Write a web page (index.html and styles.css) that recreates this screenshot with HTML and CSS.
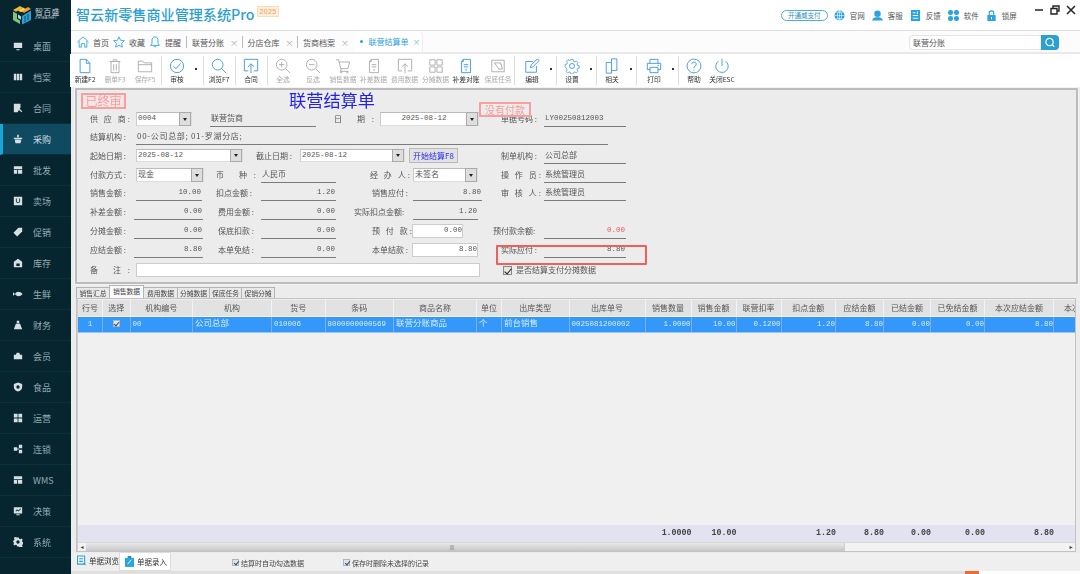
FILE: index.html
```html
<!DOCTYPE html>
<html lang="zh-CN">
<head>
<meta charset="utf-8">
<title>智云新零售商业管理系统Pro</title>
<link rel="stylesheet" href="styles.css">
</head>
<body>
<svg class="defs" width="0" height="0">
  <symbol id="i-doc" viewBox="0 0 18 18"><path d="M3.5 1.5h7l4 4.5v10.500h-11zM10.500 1.500v4.500h4"/></symbol>
  <symbol id="i-trash" viewBox="0 0 18 18"><path d="M3 4h12M7 4V2h4v2M4.500 4v12.500h9V4M7.500 7v7M10.500 7v7"/></symbol>
  <symbol id="i-folder" viewBox="0 0 18 18"><path d="M1.500 3.500h5l1.500 2h8.500v10h-15zM1.500 7.500h15"/></symbol>
  <symbol id="i-check" viewBox="0 0 18 18"><circle cx="9" cy="9" r="7.500"/><path d="M5 9.500l3 2.500 5-6"/></symbol>
  <symbol id="i-search" viewBox="0 0 18 18"><circle cx="7.500" cy="7.500" r="6"/><path d="M12 12l5 5"/></symbol>
  <symbol id="i-up" viewBox="0 0 18 18"><path d="M6 14.500H1.500v-13h15v13H12M9 17V6.500M5.500 10L9 6.500l3.500 3.500"/></symbol>
  <symbol id="i-plus" viewBox="0 0 18 18"><circle cx="7.500" cy="7.500" r="6"/><path d="M12 12l5 5M4.500 7.500h6M7.500 4.500v6"/></symbol>
  <symbol id="i-minus" viewBox="0 0 18 18"><circle cx="7.500" cy="7.500" r="6"/><path d="M12 12l5 5M4.500 7.500h6"/></symbol>
  <symbol id="i-cart" viewBox="0 0 18 18"><path d="M1 2h3l2.500 10h8l2-7.500H5M7 12l-1 3h9"/><circle cx="7" cy="16" r=".8"/><circle cx="14" cy="16" r=".8"/></symbol>
  <symbol id="i-sheet" viewBox="0 0 18 18"><path d="M6 1.500h8v15H4V4zM6 1.500V4H4M6.500 7.500h5M6.500 10h5M9 12v2.500"/></symbol>
  <symbol id="i-grid" viewBox="0 0 18 18"><path d="M2 2h6v6H2zM10 2h6v6h-6zM2 10h6v6H2zM10 10h6v6h-6z"/></symbol>
  <symbol id="i-task" viewBox="0 0 18 18"><path d="M2 2.500h14v13H2zM5 5.500h7l2 7M5 5.500l5 7h4"/></symbol>
  <symbol id="i-edit" viewBox="0 0 18 18"><path d="M14 9v7H2V4h8M7 11l1-3 7-7 2 2-7 7z"/></symbol>
  <symbol id="i-gear" viewBox="0 0 18 18"><circle cx="9" cy="9" r="2.800"/><path d="M7.500 1h3l.5 2.300 1.800.8 2-1.200 2 2.100-1.200 2 .7 1.700 2.200.6v3l-2.200.5-.7 1.800 1.200 2-2 2-2-1.200-1.800.7-.5 2.300h-3l-.5-2.300-1.800-.7-2 1.200-2-2 1.200-2-.8-1.800L-.2 10.500v-3l2.300-.6.800-1.700-1.200-2 2-2.100 2 1.200 1.800-.8z" transform="translate(1.400 .9) scale(.85)"/></symbol>
  <symbol id="i-copy" viewBox="0 0 18 18"><path d="M2.500 5h6v12h-6zM8.500 14h6V1h-6v4"/></symbol>
  <symbol id="i-print" viewBox="0 0 18 18"><path d="M4.500 6V1.500h9V6M4.500 13H1.500V6h15v7h-3M4.500 10.500h9v6h-9zM13 8.300h1.500"/></symbol>
  <symbol id="i-help" viewBox="0 0 18 18"><circle cx="9" cy="9" r="7.800"/><path d="M6.500 7a2.500 2.500 0 1 1 3.700 2.200c-1 .6-1.200 1-1.200 2.300M9 13v1"/></symbol>
  <symbol id="i-power" viewBox="0 0 18 18"><path d="M9 1v8M5 3.500a7 7 0 1 0 8 0"/></symbol>
  <symbol id="s-mon" viewBox="0 0 12 12"><path d="M1 2h10v6.500H1zM4 10h4v1H4z"/></symbol>
  <symbol id="s-arc" viewBox="0 0 12 12"><path d="M1 2h2.800v8H1zM4.500 2h2.800v8H4.500zM8 2h3v8H8z"/></symbol>
  <symbol id="s-con" viewBox="0 0 12 12"><path d="M1 1h8v4.500L5.500 11H1zM8 7l3 3-1 1-3-3z"/></symbol>
  <symbol id="s-buy" viewBox="0 0 12 12"><path d="M5 1h2v3H5zM1 4.500h10v1.500H1zM2 6.500h8l-1 4.500H3z"/></symbol>
  <symbol id="s-whl" viewBox="0 0 12 12"><path d="M1 1.500h10V5H1zM1 6h4v4.500H1zM6 6h5v4.500H6z"/></symbol>
  <symbol id="s-sto" viewBox="0 0 12 12"><path d="M1 1h10v10H1zM3.500 3v3a2.500 2.500 0 0 0 5 0V3H7.500v3a1.500 1.500 0 0 1-3 0V3z" fill-rule="evenodd"/></symbol>
  <symbol id="s-tag" viewBox="0 0 12 12"><path d="M6.500 1H11v4.500L5 11.500 .5 7z"/></symbol>
  <symbol id="s-inv" viewBox="0 0 12 12"><path d="M6 1l5 3.500V11H1V4.500zM4 6.500v3h4v-3z" fill-rule="evenodd"/></symbol>
  <symbol id="s-fsh" viewBox="0 0 12 12"><path d="M0 4l2.500 2L0 8zM2.500 6C4 3 8 2 11.500 6 8 10 4 9 2.500 6z"/></symbol>
  <symbol id="s-fin" viewBox="0 0 12 12"><path d="M4.500 1h3v3h-3zM3.500 4.500h5L11 11H1z"/></symbol>
  <symbol id="s-mem" viewBox="0 0 12 12"><path d="M4.500 2h3l1 2.500H11V10H1V4.500h2.500z"/></symbol>
  <symbol id="s-shd" viewBox="0 0 12 12"><path d="M6 .5l5 2V6c0 3-2.500 4.700-5 5.500C3.500 10.700 1 9 1 6V2.500zM6 4a2 2 0 1 0 0 4 2 2 0 0 0 0-4z" fill-rule="evenodd"/></symbol>
  <symbol id="s-ops" viewBox="0 0 12 12"><path d="M1 1h4.500v4.500H1zM6.500 1H11v4.500H6.500zM1 6.500h4.500V11H1zM6.500 6.500H11V11H6.500z"/></symbol>
  <symbol id="s-lnk" viewBox="0 0 12 12"><path d="M1 4h4v4H1zM7 1h4v4H7zM7 7h4v4H7zM5 5.500h2v1H5z"/></symbol>
  <symbol id="s-dec" viewBox="0 0 12 12"><path d="M1 1.500h10v7.500H1zM4 10h4v1H4zM3 6l2-2 1.500 1.500L9 3l.7.7-3.200 3L5 5.400 3.700 6.700z" fill-rule="evenodd"/></symbol>
  <symbol id="s-sys" viewBox="0 0 12 12"><path d="M5 .5h2l.4 1.600 1.400.6 1.500-.8 1.300 1.400-.8 1.400.6 1.400 1.100.4v2l-1.100.4-.6 1.400.8 1.400-1.300 1.300-1.500-.8-1.400.6L7 11.500H5l-.4-1.600-1.400-.6-1.500.8L.4 8.800l.8-1.400L.6 6 0 5.500v-1l1.200-.4.6-1.400L1 1.300 2.300 0zM6 4a2 2 0 1 0 0 4 2 2 0 0 0 0-4z" fill-rule="evenodd"/></symbol>
</svg>

<div class="app">
  <aside class="side">
    <div class="logo">
      <svg class="logo-mark" viewBox="0 0 20 20" width="20" height="20">
        <path d="M1 5l7-4 3 1.700-7 4z" fill="#f2b632"/><path d="M9 6l7-4 3 2-7 4z" fill="#f29a2e"/><path d="M6 5.500l5-3 3 1.700-5 3z" fill="#f7d046"/>
        <path d="M1 6.500l4 2.300v5l3 1.700V19l-7-4z" fill="#7cc47f"/><path d="M6 9.500l3 1.700v3.500l-3-1.700z" fill="#a9dcc0"/>
        <path d="M10 11l9-5.500V15l-9 4.500z" fill="#2e9fd6"/><path d="M13 11v6M16 9v6" stroke="#0b2c35" stroke-width=".7"/>
      </svg>
      <div class="logo-text"><b>智百盛</b><small>ZHIBAIHEI</small></div>
    </div>
    <nav class="nav">
      <a class="nav-item"><svg class="nav-ic"><use href="#s-mon"/></svg>桌面</a>
      <a class="nav-item"><svg class="nav-ic"><use href="#s-arc"/></svg>档案</a>
      <a class="nav-item"><svg class="nav-ic"><use href="#s-con"/></svg>合同</a>
      <a class="nav-item on"><svg class="nav-ic"><use href="#s-buy"/></svg>采购</a>
      <a class="nav-item"><svg class="nav-ic"><use href="#s-whl"/></svg>批发</a>
      <a class="nav-item"><svg class="nav-ic"><use href="#s-sto"/></svg>卖场</a>
      <a class="nav-item"><svg class="nav-ic"><use href="#s-tag"/></svg>促销</a>
      <a class="nav-item"><svg class="nav-ic"><use href="#s-inv"/></svg>库存</a>
      <a class="nav-item"><svg class="nav-ic"><use href="#s-fsh"/></svg>生鲜</a>
      <a class="nav-item"><svg class="nav-ic"><use href="#s-fin"/></svg>财务</a>
      <a class="nav-item"><svg class="nav-ic"><use href="#s-mem"/></svg>会员</a>
      <a class="nav-item"><svg class="nav-ic"><use href="#s-shd"/></svg>食品</a>
      <a class="nav-item"><svg class="nav-ic"><use href="#s-ops"/></svg>运营</a>
      <a class="nav-item"><svg class="nav-ic"><use href="#s-lnk"/></svg>连锁</a>
      <a class="nav-item"><svg class="nav-ic"><use href="#s-whl"/></svg>WMS</a>
      <a class="nav-item"><svg class="nav-ic"><use href="#s-dec"/></svg>决策</a>
      <a class="nav-item"><svg class="nav-ic"><use href="#s-sys"/></svg>系统</a>
    </nav>
  </aside>

  <main class="main">
    <header class="top">
      <h1 class="brand">智云新零售商业管理系统Pro</h1>
      <span class="year">2025</span>
      <div class="links">
        <span class="pill">开通威支付</span>
        <span class="link"><svg class="top-ic" viewBox="0 0 12 12"><circle cx="6" cy="6" r="5.500" fill="#2ba3dc"/><path d="M.5 6h11M6 .5v11M2 2.500h8M2 9.500h8M6 .5C3 3 3 9 6 11.500M6 .5c3 2.500 3 8.500 0 11" fill="none" stroke="#fff" stroke-width=".6"/></svg>官网</span>
        <span class="link"><svg class="top-ic" viewBox="0 0 12 12"><circle cx="6" cy="4" r="3.500" fill="#2ba3dc"/><path d="M0 11.500C1 8.500 3.500 8 6 8s5 .5 6 3.500z" fill="#2ba3dc"/></svg>客服</span>
        <span class="link"><svg class="top-ic" viewBox="0 0 12 12"><path d="M1 0h10v12H1z" fill="#2ba3dc"/><path d="M3 3h3M3 6h6M3 9h6M8 1.500v3" stroke="#fff" fill="none"/></svg>反馈</span>
        <span class="link"><svg class="top-ic" viewBox="0 0 12 12" fill="#2ba3dc"><rect x="0" y="0" width="5.500" height="5.500" rx="2.500"/><rect x="6.500" y="0" width="5.500" height="5.500" rx="2.500"/><rect x="0" y="6.500" width="5.500" height="5.500" rx="2.500"/><rect x="6.500" y="6.500" width="5.500" height="5.500" rx="2.500"/></svg>软件</span>
        <span class="link"><svg class="top-ic" viewBox="0 0 12 12"><path d="M3.500 6V3.500a2.500 2.500 0 0 1 5 0V6" fill="none" stroke="#2ba3dc" stroke-width="1.200"/><path d="M1.500 5.500h9V12h-9z" fill="#2ba3dc"/><path d="M5.500 7.500h1v2.500h-1z" fill="#fff"/></svg>锁屏</span>
      </div>
      <div class="win">
        <svg class="win-ic" viewBox="0 0 10 10"><path d="M1 5h8" stroke="#222" stroke-width="1.500"/></svg>
        <svg class="win-ic" viewBox="0 0 10 10"><path d="M3 3V1h6v5H7M1 3.500h6v5.500H1z" fill="none" stroke="#222" stroke-width="1.400"/></svg>
        <svg class="win-ic" viewBox="0 0 10 10"><path d="M1 1l8 8M9 1L1 9" stroke="#222" stroke-width="1.500"/></svg>
      </div>
    </header>

    <div class="tabbar">
      <span class="fix"><svg class="tab-ic" viewBox="0 0 14 14"><path d="M.5 7L7 1l6.500 6M2.500 6v7H5V9h4v4h2.500V6"/></svg>首页</span>
      <span class="fix"><svg class="tab-ic" viewBox="0 0 14 14"><path d="M7 1l1.800 4 4.500.5-3.300 3 .9 4.500L7 10.800 3.100 13l.9-4.500-3.300-3L5.200 5z"/></svg>收藏</span>
      <span class="fix"><svg class="tab-ic" viewBox="0 0 14 14"><path d="M7 1C4.500 1 3.500 3 3.500 5v3.500L2 11h10l-1.500-2.500V5C10.500 3 9.500 1 7 1zM5.500 12.500h3"/></svg>提醒</span>
      <span class="page first">联营分账<i>×</i></span>
      <span class="page">分店仓库<i>×</i></span>
      <span class="page">货商档案<i>×</i></span>
      <span class="page act"><em></em>联营结算单<i>×</i></span>
      <div class="find"><span>联营分账</span><button class="find-btn"><svg viewBox="0 0 12 12"><circle cx="5.500" cy="5.500" r="4" fill="none" stroke="#fff" stroke-width="1.300"/><path d="M8.500 8.500l2 2" stroke="#fff" stroke-width="1.300"/></svg></button></div>
    </div>

    <div class="tools">
      <a class="tool dark"><svg class="ti blue"><use href="#i-doc"/></svg>新建F2</a>
      <a class="tool off"><svg class="ti"><use href="#i-trash"/></svg>删单F3</a>
      <a class="tool off"><svg class="ti"><use href="#i-folder"/></svg>保存F5</a>
      <s class="sep"></s>
      <a class="tool dark"><svg class="ti blue"><use href="#i-check"/></svg>审核</a><b class="more long"></b>
      <s class="sep"></s>
      <a class="tool dark"><svg class="ti blue"><use href="#i-search"/></svg>浏览F7</a>
      <s class="sep"></s>
      <a class="tool dark"><svg class="ti blue"><use href="#i-up"/></svg>合同</a>
      <s class="sep"></s>
      <a class="tool off"><svg class="ti"><use href="#i-plus"/></svg>全选</a>
      <a class="tool off"><svg class="ti"><use href="#i-minus"/></svg>反选</a>
      <a class="tool off"><svg class="ti"><use href="#i-cart"/></svg>销售数据</a>
      <a class="tool off wide"><svg class="ti"><use href="#i-sheet"/></svg>补差数据</a>
      <a class="tool off wide"><svg class="ti"><use href="#i-up"/></svg>费用数据</a>
      <a class="tool off wide"><svg class="ti"><use href="#i-grid"/></svg>分摊数据</a>
      <a class="tool dark"><svg class="ti blue"><use href="#i-sheet"/></svg>补差对账</a>
      <a class="tool off push"><svg class="ti"><use href="#i-task"/></svg>保底任务</a>
      <s class="sep"></s>
      <a class="tool dark push"><svg class="ti blue"><use href="#i-edit"/></svg>编辑</a><b class="more"></b>
      <s class="sep"></s>
      <a class="tool dark"><svg class="ti blue"><use href="#i-gear"/></svg>设置</a><b class="more"></b>
      <s class="sep"></s>
      <a class="tool dark"><svg class="ti blue"><use href="#i-copy"/></svg>相关</a><b class="more"></b>
      <s class="sep"></s>
      <a class="tool dark push"><svg class="ti blue"><use href="#i-print"/></svg>打印</a><b class="more"></b>
      <s class="sep"></s>
      <a class="tool dark"><svg class="ti blue"><use href="#i-help"/></svg>帮助</a>
      <a class="tool dark pull"><svg class="ti blue"><use href="#i-power"/></svg>关闭ESC</a>
    </div>

    <section class="form">
      <span class="stamp stamp-a">已终审</span>
      <span class="stamp stamp-b">没有付款</span>
      <span class="callout"></span>
      <h2 class="doc-title">联营结算单</h2>

      <div class="row h18">
        <span class="lb w46"><span class="jf">供 应 商:</span></span>
        <span class="sel w56">0004<b></b></span>
        <span class="fld w106 ml18">联营货商</span>
        <span class="lb w46 ml18"><span class="jf">日 期:</span></span>
        <span class="sel w99 tc">2025-08-12<b></b></span>
        <span class="lb w43 ml22">单据号码 :</span>
        <span class="fld w82 mono">LY00250812003</span>
      </div>
      <div class="row h17">
        <span class="lb w46">结算机构 :</span>
        <span class="fld w472 airy">00-公司总部; 01-罗湖分店;</span>
      </div>
      <div class="row h21">
        <span class="lb w46">起始日期 :</span>
        <span class="sel w107">2025-08-12<b></b></span>
        <span class="lb w44 ml13">截止日期 :</span>
        <span class="sel w105">2025-08-12<b></b></span>
        <span class="btn ml4">开始结算F8</span>
        <span class="lb w43 ml43">制单机构 :</span>
        <span class="fld w82">公司总部</span>
      </div>
      <div class="row h18">
        <span class="lb w46">付款方式 :</span>
        <span class="sel w68 cn">现金<b></b></span>
        <span class="lb w45 ml12"><span class="jf">币 种:</span></span>
        <span class="fld w75">人民币</span>
        <span class="lb w43 ml34"><span class="jf">经 办 人:</span></span>
        <span class="sel w65 cn">未签名<b></b></span>
        <span class="lb w43 ml23"><span class="jf">操 作 员:</span></span>
        <span class="fld w82">系统管理员</span>
      </div>
      <div class="row h17">
        <span class="lb w46">销售金额 :</span>
        <span class="fld num w66">10.00</span>
        <span class="lb w45 ml14">扣点金额 :</span>
        <span class="fld num w75">1.20</span>
        <span class="lb w41 ml36">销售应付 :</span>
        <span class="fld num w69">8.80</span>
        <span class="lb w43 ml19"><span class="jf">审 核 人:</span></span>
        <span class="fld w82">系统管理员</span>
      </div>
      <div class="row h21">
        <span class="lb w44">补差金额 :</span>
        <span class="fld num w69">0.00</span>
        <span class="lb w43 ml15">费用金额 :</span>
        <span class="fld num w75">0.00</span>
        <span class="lb w59 ml18">实际扣点金额:</span>
        <span class="fld num w65">1.20</span>
      </div>
      <div class="row h18">
        <span class="lb w44">分摊金额 :</span>
        <span class="fld num w69">0.00</span>
        <span class="lb w43 ml15">保底扣款 :</span>
        <span class="fld num w75">0.00</span>
        <span class="lb w40 ml36"><span class="jf">预 付 款:</span></span>
        <span class="inp num w51">0.00</span>
        <span class="lb w51 ml30">预付款余额:</span>
        <span class="fld num red w82">0.00</span>
      </div>
      <div class="row h20">
        <span class="lb w44">应结金额 :</span>
        <span class="fld num w69">8.80</span>
        <span class="lb w43 ml15">本单免结 :</span>
        <span class="fld num w75">0.00</span>
        <span class="lb w40 ml36">本单结款 :</span>
        <span class="inp num w66">8.80</span>
        <span class="lb w43 ml23">实际应付 :</span>
        <span class="fld num w82">8.80</span>
      </div>
      <div class="row h20">
        <span class="lb w46"><span class="jf">备 注:</span></span>
        <span class="inp w344"></span>
        <span class="cb ml23"></span>
        <span class="lb cb-text">是否结算支付分摊数据</span>
      </div>
    </section>

    <div class="subtabs">
      <span class="st w34">销售汇总</span>
      <span class="st act w35">销售数据</span>
      <span class="st w35">费用数据</span>
      <span class="st w33">分摊数据</span>
      <span class="st w33">保底任务</span>
      <span class="st w34">促销分摊</span>
    </div>

    <section class="grid">
      <div class="gr head">
        <span>行号</span><span>选择</span><span>机构编号</span><span>机构</span><span>货号</span><span>条码</span><span>商品名称</span><span>单位</span><span>出库类型</span><span>出库单号</span><span>销售数量</span><span>销售金额</span><span>联营扣率</span><span>扣点金额</span><span>应结金额</span><span>已结金额</span><span>已免结金额</span><span>本次应结金额</span><span class="clip">本次</span>
      </div>
      <div class="gr sel-row">
        <span class="c">1</span><span class="c"><i class="tick"></i></span><span>00</span><span class="cn">公司总部</span><span>010006</span><span>8000000000569</span><span class="cn">联营分账商品</span><span class="cn">个</span><span class="cn">前台销售</span><span>0025081200002</span><span class="r">1.0000</span><span class="r">10.00</span><span class="r">0.1200</span><span class="r">1.20</span><span class="r">8.80</span><span class="r">0.00</span><span class="r">0.00</span><span class="r">8.80</span><span></span>
      </div>
      <div class="empty"></div>
      <div class="gr sum">
        <span></span><span></span><span></span><span></span><span></span><span></span><span></span><span></span><span></span><span></span><span class="r">1.0000</span><span class="r">10.00</span><span></span><span class="r">1.20</span><span class="r">8.80</span><span class="r">0.00</span><span class="r">0.00</span><span class="r">8.80</span><span></span>
      </div>
      <div class="scroll">
        <span class="arrow">◂</span>
        <span class="thumb"><em>|||</em></span>
        <span class="arrow end">▸</span>
      </div>
    </section>

    <footer class="foot">
      <span class="ft"><svg class="ft-ic" viewBox="0 0 10 12"><path d="M.5 1h8v9H.5zM2.500 4h4M2.500 7h4M7 9l2.500 2" fill="none" stroke="#2ba3dc" stroke-width="1.200"/></svg>单据浏览</span>
      <span class="ft act"><svg class="ft-ic" viewBox="0 0 10 12"><path d="M0 2h10v10H0z" fill="#2ba3dc"/><path d="M3 9l4-5" stroke="#fff"/><path d="M3 0h4v2H3z" fill="#1b7fb0"/></svg>单据录入</span>
      <label class="opt first"><i class="tick grey"></i>结算时自动勾选数据</label>
      <label class="opt second"><i class="tick grey"></i>保存时删除未选择的记录</label>
    </footer>
    <div class="edge"><span class="wm"></span></div>
  </main>
</div>
</body>
</html>
```

FILE: styles.css
```css
* { box-sizing: border-box; }
html, body { margin: 0; height: 100%; overflow: hidden; }
body { font-family: "Noto Sans CJK SC", "Liberation Sans", sans-serif; font-size: 8px; color: #444; background: #ececec; }
.defs { position: absolute; }
a { color: inherit; text-decoration: none; }
.app { display: flex; width: 1080px; height: 574px; filter: blur(.3px); }

/* sidebar */
.side { width: 71px; flex: none; background: #06252f; color: #95abb2; }
.logo { height: 31px; display: flex; align-items: center; padding: 0 0 2px 12px; gap: 3px; }
.logo-text { display: flex; flex-direction: column; color: #c9d4d8; line-height: 1; }
.logo-text b { font-weight: 400; font-size: 8px; letter-spacing: .2px; }
.logo-text small { font-family: "Liberation Sans", sans-serif; font-size: 3.500px; letter-spacing: .5px; margin-top: 1px; }
.nav-item { height: 31px; display: flex; align-items: center; padding-left: 13px; font-size: 9px; border-bottom: 1px solid #0c303a; gap: 10px; }
.nav-item.on { background: #0f4a60; border-left: 3px solid #18a6d8; padding-left: 10px; color: #d0dfe4; }
.nav-ic { width: 10px; height: 10px; fill: #d6e0e3; flex: none; }

/* title bar */
.main { flex: 1; min-width: 0; display: flex; flex-direction: column; }
.top { height: 31px; flex: none; background: #fff; display: flex; align-items: center; padding-left: 5px; position: relative; border-bottom: 1px solid #ddd; }
.brand { margin: -1px 0 0; font-size: 14.100px; font-weight: 500; color: #2b9fd2; white-space: nowrap; line-height: 1; }
.year { margin: -7px 0 0 3px; padding: 0 1px; font: 7px/9px "Liberation Sans", sans-serif; color: #f2a14a; background: #fdeedd; border: 1px solid #fbdcb8; letter-spacing: .4px; }
.links { margin-left: 502px; display: flex; align-items: center; }
.pill { width: 47px; height: 11px; border: 1px solid #48aedd; border-radius: 6px; font-size: 6.500px; line-height: 9px; text-align: center; color: #2b8fc0; margin-right: 6px; white-space: nowrap; }
.link { display: flex; align-items: center; width: 38px; font-size: 7.500px; color: #555; gap: 5px; }
.top-ic { width: 11px; height: 11px; flex: none; }
.win { position: absolute; right: 4px; top: 5px; display: flex; gap: 6px; }
.win-ic { width: 10px; height: 10px; }

/* tab bar */
.tabbar { height: 23px; flex: none; background: #fcfcfc; display: flex; align-items: center; padding: 1px 0 0 6px; border-bottom: 2px solid #e9e9e9; position: relative; color: #555; }
.fix { display: flex; align-items: center; gap: 4px; margin-right: 4px; white-space: nowrap; }
.tab-ic { width: 12px; height: 12px; fill: none; stroke: #2ba3dc; stroke-width: 1; flex: none; }
.page { display: flex; align-items: center; height: 12px; width: 55.500px; padding-left: 5px; border-left: 1px solid #bbb; white-space: nowrap; }
.page.first { margin-left: 1px; }
.page i { font-style: normal; color: #aaa; margin-left: 6px; font-size: 8px; }
.page.act { height: 21px; margin: -1px 0 0 2px; width: 67px; border-left: 0; padding-left: 5px; background: #fff; color: #2ba3dc; border-radius: 0 6px 0 0; box-shadow: 1px 0 0 #eee; }
.page.act em { width: 3px; height: 3px; border-radius: 50%; background: #2ba3dc; margin-right: 6px; }
.page.act i { margin-left: 4px; color: #6cc0e5; }
.find { position: absolute; left: 838px; top: 4px; width: 150px; height: 15px; border: 1px solid #e4e4e4; border-radius: 4px; display: flex; align-items: center; justify-content: space-between; padding-left: 3px; background: #fff; }
.find-btn { width: 18px; height: 15px; margin: 0 -1px 0 0; padding: 2px 3px; border: 0; background: #2ba0d2; border-radius: 0 4px 4px 0; }
.find-btn svg { display: block; width: 12px; height: 11px; }

/* toolbar */
.tools { height: 33px; flex: none; background: #fff; display: flex; margin-left: -1px; }
.tool { width: 30px; flex: none; display: flex; flex-direction: column; align-items: center; padding-top: 4px; font-size: 6.800px; white-space: nowrap; line-height: 9px; letter-spacing: -.1px; }
.tool.wide { width: 31px; }
.tool.push { margin-left: 2px; }
.tool.pull { margin-left: -2px; }
.tool.dark { color: #333; }
.tool.off { color: #aaa; }
.ti { width: 16px; height: 16px; margin-bottom: 1px; fill: none; stroke: #a8a8a8; stroke-width: 1; flex: none; }
.ti.blue { stroke: #3a94de; }
.sep { display: block; width: 1px; margin: 2px 0 2px 1px; background: #ddd; flex: none; }
.more { width: 8px; flex: none; position: relative; }
.more.long { width: 10px; }
.more::after { content: ""; position: absolute; left: 3px; top: 14px; width: 2px; height: 2px; background: #333; }

/* form */
.form { height: 196px; flex: none; margin: 1px 2px 0 4px; background: #ececec; border: 2px solid #bcbcbc; position: relative; padding-left: 13px; outline: 1px solid #f4f4f4; }
.doc-title { margin: 0; height: 20px; padding-left: 199px; font-size: 17.200px; line-height: 20px; font-weight: 400; color: #2323e8; white-space: nowrap; }
.row { display: flex; align-items: center; white-space: nowrap; }
.stamp { position: absolute; border: 2px solid #f8a0a0; color: #f79c9c; white-space: nowrap; line-height: 1; text-align: center; }
.stamp-a { left: 4px; top: 3px; width: 45px; height: 16px; font-size: 12px; background: #f3e6e6; }
.stamp-b { left: 402px; top: 12px; width: 52px; height: 15px; font-size: 10px; padding-top: 1px; }
.callout { position: absolute; left: 419px; top: 155px; width: 151px; height: 20px; border: 2px solid #ef6058; border-radius: 1px; z-index: 1; }
.h17 { height: 17px; } .h18 { height: 18px; } .h20 { height: 20px; } .h21 { height: 21px; }
.lb { flex: none; font-size: 8px; color: #555; line-height: 14px; }
.jf { display: block; width: 40px; text-align-last: justify; text-justify: inter-word; }
.fld { flex: none; height: 16px; line-height: 14px; border-bottom: 1.500px solid #7b7b7b; padding: 0 1px; color: #555; }
.airy { letter-spacing: .7px; }
.num { font-family: "Liberation Mono", monospace; font-size: 7.500px; text-align: right; color: #555; }
.mono { font-family: "Liberation Mono", monospace; font-size: 7.500px; }
.red { color: #ef5a5a; }
.sel { flex: none; height: 13.500px; background: #fff; border: 1px solid #ddd; border-top-color: #bbb; border-left-color: #ccc; font-family: "Liberation Mono", "Noto Sans CJK SC", monospace; font-size: 7.500px; line-height: 11px; padding-left: 1px; position: relative; color: #555; }
.sel.tc { text-align: center; padding-right: 12px; }
.sel.cn { font-size: 8px; }
.sel b { position: absolute; right: 0; top: -1px; width: 12px; height: 13.500px; background: #dedede; border: 1px solid #aaa; }
.sel b::after { content: ""; position: absolute; left: 3px; top: 4.500px; border: 2px solid transparent; border-top: 3px solid #222; border-bottom: 0; }
.inp { flex: none; height: 13.500px; background: #fff; border: 1px solid #ccc; line-height: 11px; padding-right: 0; }
.btn { flex: none; width: 49px; height: 15px; background: #e2e2e2; border: 1px solid #b9b9b9; color: #2b2bee; text-align: center; line-height: 13px; white-space: nowrap; font-size: 8px; }
.cb { flex: none; width: 9px; height: 9px; background: #e6e6e6; border: 1px solid #888; position: relative; }
.cb::after { content: ""; position: absolute; left: 2px; top: 0; width: 3px; height: 6px; border: solid #222; border-width: 0 1.200px 1.200px 0; transform: rotate(40deg); }
.cb-text { margin-left: 4px; }
.w33{width:33px}.w34{width:34px}.w35{width:35px}.w40{width:40px}.w41{width:41px}.w43{width:43px}.w44{width:44px}.w45{width:45px}.w46{width:46px}.w51{width:51px}.w56{width:56px}.w59{width:59px}.w65{width:65px}.w66{width:66px}.w68{width:68px}.w69{width:69px}.w75{width:75px}.w82{width:82px}.w99{width:99px}.w105{width:105px}.w106{width:106px}.w107{width:107px}.w344{width:344px}.w472{width:472px}
.ml4{margin-left:4px}.ml12{margin-left:12px}.ml13{margin-left:13px}.ml14{margin-left:14px}.ml15{margin-left:15px}.ml18{margin-left:18px}.ml19{margin-left:19px}.ml22{margin-left:22px}.ml23{margin-left:23px}.ml30{margin-left:30px}.ml34{margin-left:34px}.ml36{margin-left:36px}.ml43{margin-left:43px}

/* sub tabs */
.subtabs { height: 14px; flex: none; padding-left: 5px; display: flex; align-items: flex-end; }
.st { flex: none; height: 11.500px; background: #e9e9e9; border: 1px solid #b3b3b3; border-bottom: 0; margin-right: -1px; font-size: 6.800px; line-height: 10px; text-align: center; white-space: nowrap; color: #444; }
.st.act { height: 13.500px; background: #fafafa; position: relative; z-index: 1; }

/* grid */
.grid { height: 254px; flex: none; margin: 0 4px 0 5px; border: 1px solid #c2c2c2; padding: 1px 0 0 1px; display: flex; flex-direction: column; background: #f0f0f0; box-shadow: inset 1px 0 0 #ccc; }
.gr { display: grid; grid-template-columns: 25px 27.500px 62.500px 79px 53.500px 68.500px 83px 25px 67.500px 76px 46px 45px 45px 54.500px 48px 47px 54px 69px 22px; flex: none; white-space: nowrap; overflow: hidden; }
.gr > span { overflow: hidden; padding: 0 2px; }
.gr .c { text-align: center; }
.gr .r { text-align: right; padding: 0; }
.gr .cn { font-size: 8.500px; }
.gr .clip { padding: 0 0 0 10px; text-align: left; }
.head { height: 17px; background: #e3e2e2; border-bottom: 1px solid #f4f4f4; line-height: 16px; text-align: center; color: #555; }
.head > span { border-right: 1px solid #f2f2f2; }
.sel-row { height: 16px; background: #3498fb; color: #d8ebff; line-height: 15px; font-family: "Liberation Mono", "Noto Sans CJK SC", monospace; font-size: 7.500px; border-bottom: 1px solid #9cc6ee; }
.sel-row > span { border-right: 1px solid #7cb0e2; }
.tick { display: inline-block; width: 7px; height: 7px; background: #dfe3ea; border: 1px solid #a9b6c6; position: relative; vertical-align: -1px; }
.tick::after { content: ""; position: absolute; left: 1.500px; top: 0; width: 2px; height: 4px; border: solid #445; border-width: 0 1px 1px 0; transform: rotate(40deg); }
.empty { flex: 1; }
.sum { height: 17px; background: #e2e2f0; line-height: 16px; font-family: "Liberation Mono", monospace; font-size: 8.300px; font-weight: 700; color: #444; }
.scroll { height: 9px; flex: none; display: flex; align-items: center; background: #f2f2f2; border-top: 1px solid #d8d8d8; font-size: 6px; color: #444; }
.arrow { width: 8px; line-height: 8px; text-align: center; font-family: "DejaVu Sans", sans-serif; }
.arrow.end { margin-left: auto; }
.thumb { width: 759px; height: 8px; background: linear-gradient(#e9e9e9, #c6c6c6); display: flex; align-items: center; padding-left: 364px; font-size: 5px; border-right: 1px solid #ccc; }
.thumb em { font-style: normal; font-family: "Liberation Sans", sans-serif; color: #666; }

/* footer */
.foot { height: 18px; flex: none; margin-top: 1px; display: flex; align-items: flex-start; padding-left: 3px; background: #efefef; }
.ft { display: flex; align-items: center; gap: 3px; height: 15px; width: 46px; padding-left: 3px; font-size: 7.500px; white-space: nowrap; color: #333; }
.ft.act { width: 50px; height: 17px; background: #fff; box-shadow: 0 0 0 1px #ddd; padding-left: 5px; }
.ft-ic { width: 9px; height: 11px; flex: none; }
.opt { display: flex; align-items: center; gap: 2px; height: 17px; margin-top: 1px; font-size: 7px; color: #444; white-space: nowrap; }
.opt.first { margin-left: 62px; }
.opt.second { margin-left: 39px; }
.edge { flex: 1; background: #dfdfdf; position: relative; }
.wm { position: absolute; left: 894px; top: 0; width: 115px; height: 3px; background: #fff; border-left: 14px solid #ef6a2c; }
```
